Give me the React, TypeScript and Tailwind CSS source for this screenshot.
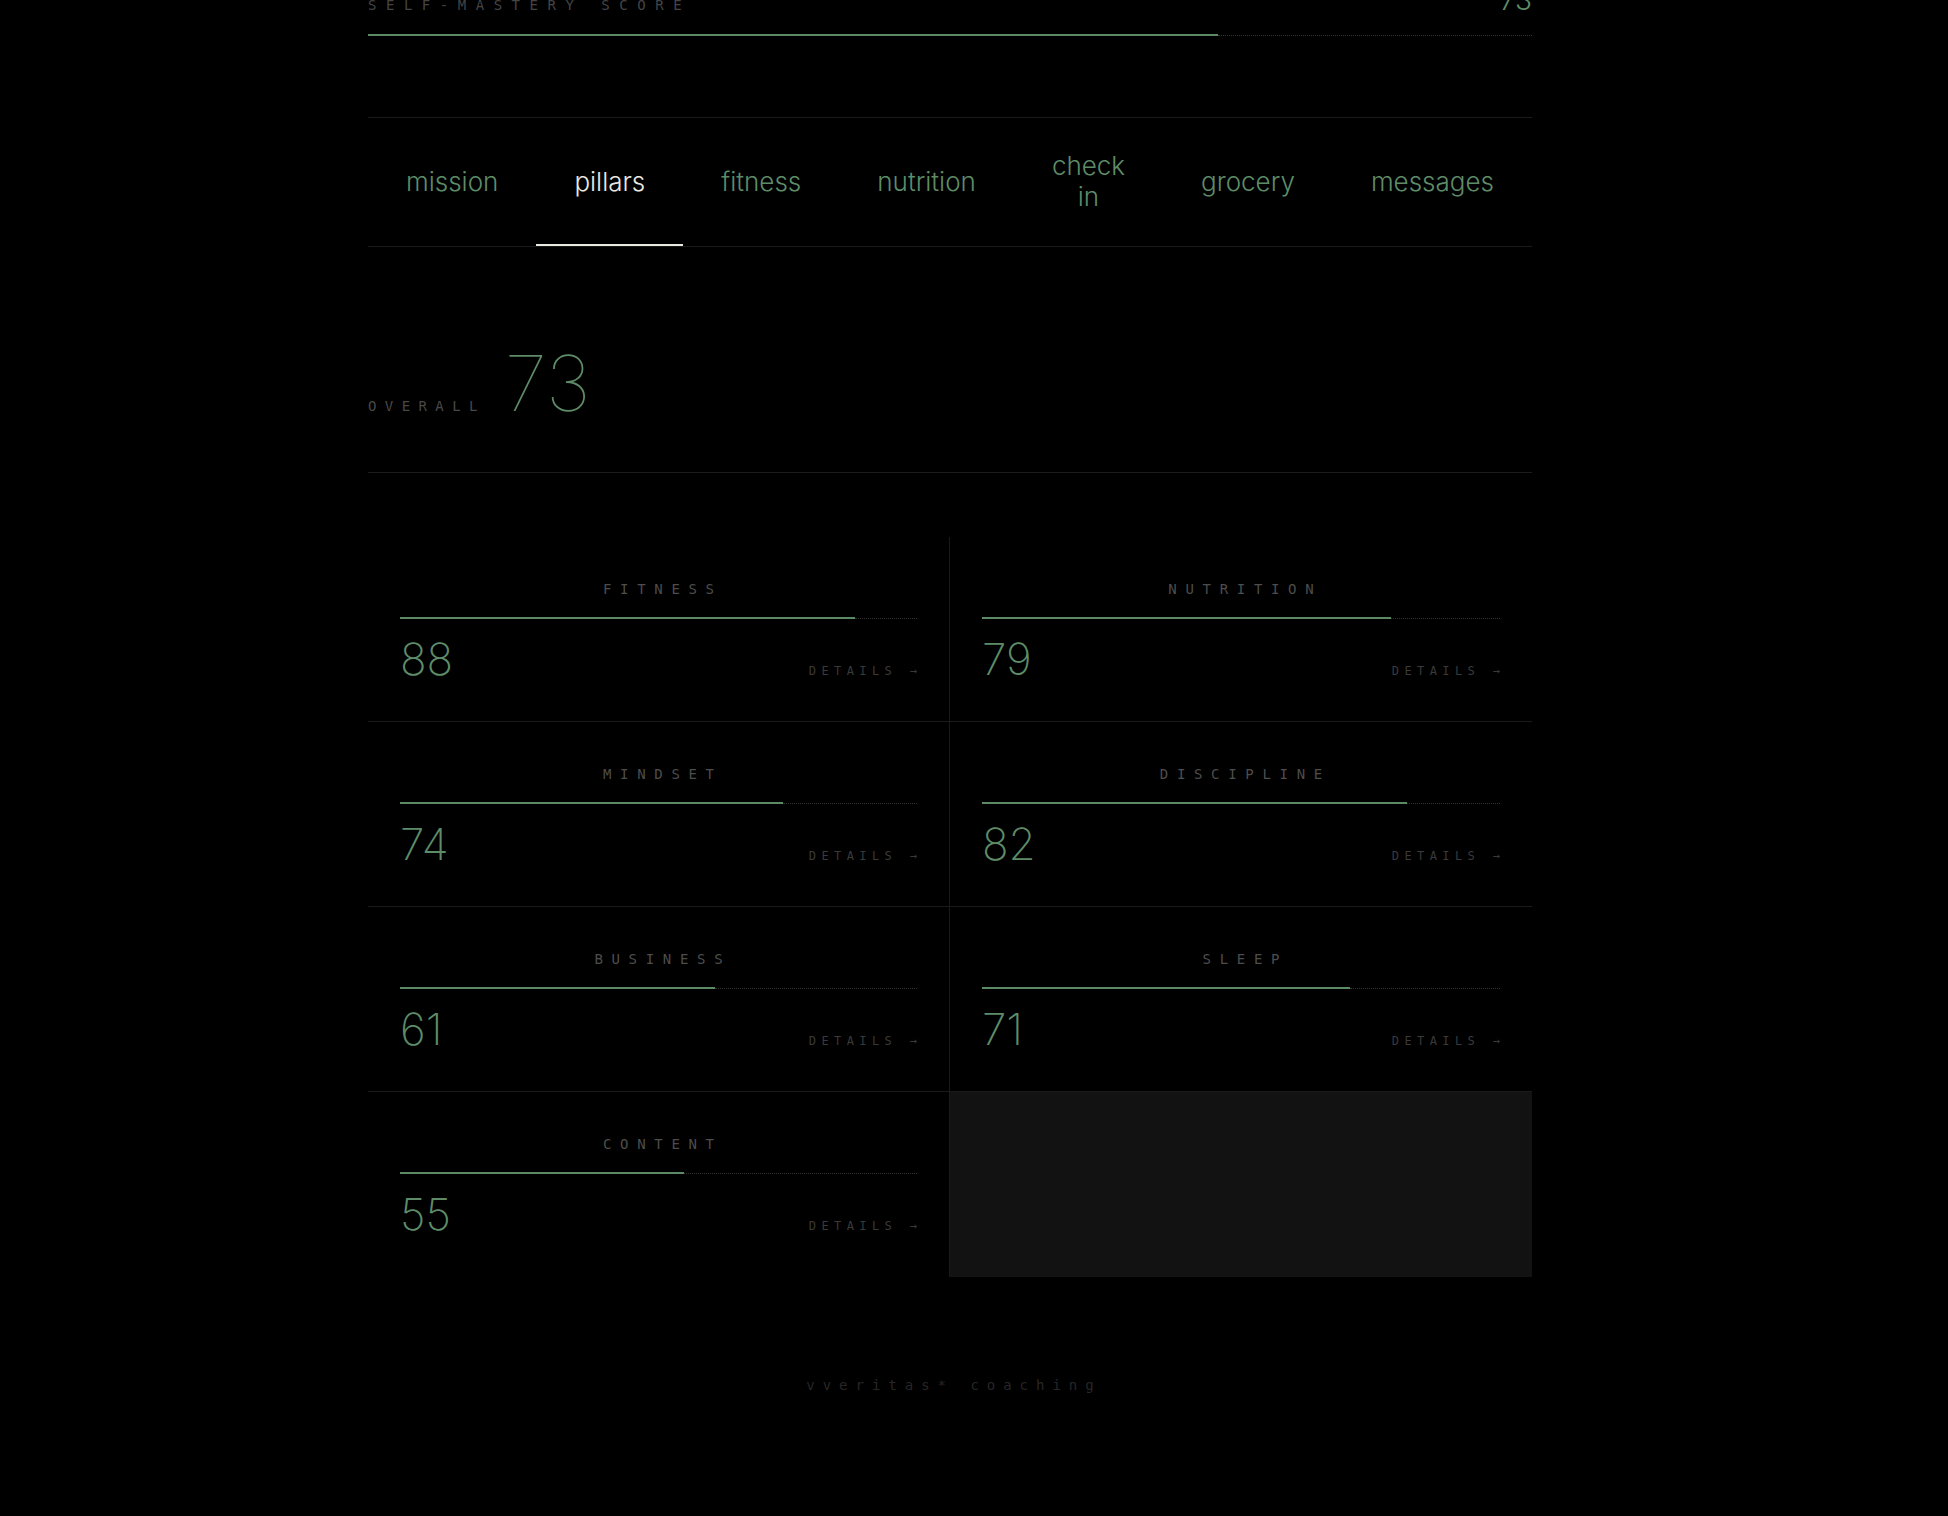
import React from "react";

const tabs = ["mission", "pillars", "fitness", "nutrition", "check in", "grocery", "messages"];

const pillars = [
  { name: "FITNESS", score: 88 },
  { name: "NUTRITION", score: 79 },
  { name: "MINDSET", score: 74 },
  { name: "DISCIPLINE", score: 82 },
  { name: "BUSINESS", score: 61 },
  { name: "SLEEP", score: 71 },
  { name: "CONTENT", score: 55 },
];

const mono = "font-['DejaVu_Sans_Mono','Liberation_Mono',monospace]";
const sans = "font-['Inter','Noto_Sans',sans-serif]";

function Bar({ value }: { value: number }) {
  return (
    <div className="flex items-center h-[2px]">
      <div className="h-[2px] bg-[#5b8a65]" style={{ width: `${value}%` }} />
      <div className="flex-1 border-t border-dotted border-[#333]" />
    </div>
  );
}

function PillarCell({ name, score, right, last }: { name: string; score: number; right: boolean; last: boolean }) {
  return (
    <div className={`h-[185px] px-8 pt-[44px] border-[#1a1a1a] ${last ? "" : "border-b"} ${right ? "" : "border-r"}`}>
      <div className={`${mono} text-[14px] leading-4 tracking-[0.62em] text-center text-[#4d4d4d] pl-[0.62em]`}>
        {name}
      </div>
      <div className="mt-5">
        <Bar value={score} />
      </div>
      <div className="mt-[18px] flex items-baseline justify-between">
        <span className={`${sans} text-[44px] leading-none font-extralight text-[#5e8c68]`}>{score}</span>
        <span className={`${mono} text-[12px] tracking-[0.45em] text-[#3a3a3a] mr-[-0.45em]`}>DETAILS →</span>
      </div>
    </div>
  );
}

export default function App() {
  return (
    <div className="min-h-[1516px] bg-black overflow-hidden">
      <div className="flex justify-center pr-[48px]">
        <div className="w-[1164px] -mt-[14px]">
          {/* Score header */}
          <div className="flex items-baseline justify-between">
            <span className={`${mono} text-[14px] tracking-[0.68em] text-[#444]`}>SELF-MASTERY SCORE</span>
            <span className={`${sans} text-[28px] leading-none font-light text-[#5e8c68]`}>73</span>
          </div>
          <div className="mt-[18px]">
            <Bar value={73} />
          </div>

          {/* Tabs */}
          <nav className="mt-[81px] h-[130px] flex justify-between border-y border-[#1a1a1a]">
            {tabs.map((t) => (
              <button
                key={t}
                className={`${sans} flex items-center justify-center px-[38px] text-[26px] leading-[31px] font-light border-b-2 ${
                  t === "pillars" ? "text-[#e9e9e2] border-[#e9e9e2]" : "text-[#5e8c68] border-transparent"
                }`}
              >
                <span className={t === "check in" ? "w-min text-center" : ""}>{t}</span>
              </button>
            ))}
          </nav>

          {/* Overall */}
          <div className="mt-[98px] pb-[50px] border-b border-[#1c1c1c] flex items-baseline gap-[19px]">
            <span className={`${mono} text-[14px] tracking-[0.6em] text-[#484848]`}>OVERALL</span>
            <span className={`${sans} text-[77px] leading-none font-thin text-[#5e8c68]`}>73</span>
          </div>

          {/* Pillars grid */}
          <div className="mt-16 grid grid-cols-2">
            {pillars.map((p, i) => (
              <PillarCell
                key={p.name}
                name={p.name}
                score={p.score}
                right={i % 2 === 1}
                last={i === pillars.length - 1}
              />
            ))}
            <div className="h-[185px] bg-[#121212]" />
          </div>

          {/* Footer */}
          <div className={`${mono} mt-[100px] text-center text-[14px] leading-4 tracking-[0.57em] text-[#262626] pl-[0.57em]`}>
            vveritas* coaching
          </div>
        </div>
      </div>
    </div>
  );
}
